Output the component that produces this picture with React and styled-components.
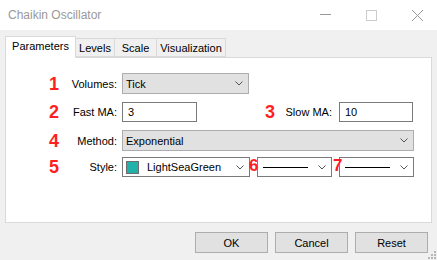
import React from 'react';
import styled, { createGlobalStyle } from 'styled-components';

const GlobalStyle = createGlobalStyle`
  body {
    margin: 0;
    background: #f0f0f0;
    font-family: "Liberation Sans", Arial, sans-serif;
  }
`;

const Window = styled.div`
  position: relative;
  width: 437px;
  height: 260px;
  background: #f0f0f0;
  overflow: hidden;
  font-size: 11px;
  color: #000;
`;

const TitleBar = styled.div`
  height: 30px;
  background: #fff;
  display: flex;
  align-items: center;
  justify-content: space-between;
`;

const Title = styled.div`
  padding-left: 8px;
  font-size: 12px;
  color: #999;
`;

const Controls = styled.div`
  display: flex;
  margin-right: -3px;
`;

const Caption = styled.div`
  width: 46px;
  height: 30px;
  display: flex;
  align-items: center;
  justify-content: center;
`;

const Body = styled.div`
  padding: 6px 5px 0 5px;
`;

const Tabs = styled.div`
  display: flex;
  align-items: flex-end;
  height: 21px;
`;

const Tab = styled.div`
  box-sizing: border-box;
  width: ${p => p.$w}px;
  height: ${p => (p.$active ? 22 : 19)}px;
  margin-left: ${p => (p.$first ? 0 : -1)}px;
  margin-bottom: ${p => (p.$active ? -1 : 0)}px;
  border: 1px solid #d9d9d9;
  border-bottom: ${p => (p.$active ? 'none' : '1px solid #d9d9d9')};
  background: ${p => (p.$active ? '#fff' : '#f0f0f0')};
  position: relative;
  z-index: ${p => (p.$active ? 2 : 1)};
  display: flex;
  align-items: center;
  justify-content: center;
  padding-bottom: ${p => (p.$active ? 3 : 0)}px;
`;

const Panel = styled.div`
  box-sizing: border-box;
  width: 427px;
  height: 166px;
  background: #fff;
  border: 1px solid #d9d9d9;
  padding: 15px 0 0 36px;
  display: flex;
  flex-direction: column;
`;

const Row = styled.div`
  display: flex;
  align-items: center;
  height: ${p => p.$h}px;
  margin-bottom: ${p => p.$mb || 0}px;
`;

const Num = styled.div`
  width: 24px;
  flex-shrink: 0;
  text-align: center;
  color: #ff1f1f;
  font-weight: bold;
  font-size: 18px;
  line-height: 1;
  margin-left: ${p => p.$ml || 0}px;
`;

const Mark = styled.div`
  position: absolute;
  left: ${p => p.$left}px;
  top: -1px;
  color: #ff1f1f;
  font-weight: bold;
  font-size: 17px;
  line-height: 1;
  z-index: 2;
`;

const Label = styled.div`
  width: ${p => p.$w || 51}px;
  flex-shrink: 0;
  text-align: right;
  margin-right: ${p => p.$mr || 5}px;
  white-space: nowrap;
`;

const Select = styled.div`
  position: relative;
  box-sizing: border-box;
  width: ${p => p.$w}px;
  height: ${p => p.$h || 21}px;
  margin-left: ${p => p.$ml || 0}px;
  background: ${p => (p.$white ? '#fff' : '#e1e1e1')};
  border: 1px solid ${p => (p.$white ? '#7a7a7a' : '#adadad')};
  display: flex;
  align-items: center;
  padding: 0 5px 0 3px;
`;

const SelectText = styled.div`
  flex: 1;
  display: flex;
  align-items: center;
  white-space: nowrap;
`;

const Swatch = styled.div`
  width: 11px;
  height: 11px;
  border: 1px solid #6d6d6d;
  background: #20b2aa;
  margin-right: 8px;
`;

const LineSample = styled.div`
  width: 45px;
  height: 1px;
  background: #000;
  margin-left: 2px;
`;

const Input = styled.div`
  box-sizing: border-box;
  width: ${p => p.$w}px;
  height: 20px;
  border: 1px solid #7a7a7a;
  background: #fff;
  display: flex;
  align-items: center;
  padding-left: 5px;
`;

const Footer = styled.div`
  display: flex;
  justify-content: flex-end;
  gap: 7px;
  margin-top: 9px;
  padding-right: 4px;
`;

const Button = styled.div`
  box-sizing: border-box;
  width: 73px;
  height: 21px;
  background: #e1e1e1;
  border: 1px solid #adadad;
  display: flex;
  align-items: center;
  justify-content: center;
`;

const Grip = styled.svg`
  position: absolute;
  right: 1px;
  bottom: 1px;
`;

const Chevron = () => (
  <svg width="8" height="5" viewBox="0 0 8 5">
    <polyline points="0.5,0.5 4,4 7.5,0.5" fill="none" stroke="#555" strokeWidth="1" />
  </svg>
);

const TABS = [
  { name: 'Parameters', w: 71 },
  { name: 'Levels', w: 40 },
  { name: 'Scale', w: 43 },
  { name: 'Visualization', w: 70 },
];

export default function App() {
  return (
    <Window>
      <GlobalStyle />
      <TitleBar>
        <Title>Chaikin Oscillator</Title>
        <Controls>
          <Caption>
            <svg width="11" height="2"><line x1="0" y1="0.5" x2="11" y2="0.5" stroke="#999" /></svg>
          </Caption>
          <Caption>
            <svg width="11" height="11"><rect x="0.5" y="0.5" width="10" height="10" fill="none" stroke="#ccc" /></svg>
          </Caption>
          <Caption>
            <svg width="11" height="11">
              <line x1="0" y1="0" x2="11" y2="11" stroke="#999" />
              <line x1="11" y1="0" x2="0" y2="11" stroke="#999" />
            </svg>
          </Caption>
        </Controls>
      </TitleBar>
      <Body>
        <Tabs>
          {TABS.map((t, i) => (
            <Tab key={t.name} $w={t.w} $first={i === 0} $active={i === 0}>{t.name}</Tab>
          ))}
        </Tabs>
        <Panel>
          <Row $h={21} $mb={8}>
            <Num>1</Num>
            <Label>Volumes:</Label>
            <Select $w={127}>
              <SelectText>Tick</SelectText>
              <Chevron />
            </Select>
          </Row>
          <Row $h={20} $mb={8}>
            <Num>2</Num>
            <Label>Fast MA:</Label>
            <Input $w={75}>3</Input>
            <Num $ml={61}>3</Num>
            <Label $w={50} $mr={7}>Slow MA:</Label>
            <Input $w={74}>10</Input>
          </Row>
          <Row $h={21} $mb={6}>
            <Num>4</Num>
            <Label>Method:</Label>
            <Select $w={292}>
              <SelectText>Exponential</SelectText>
              <Chevron />
            </Select>
          </Row>
          <Row $h={20}>
            <Num>5</Num>
            <Label>Style:</Label>
            <Select $w={128} $h={20} $white>
              <SelectText><Swatch />LightSeaGreen</SelectText>
              <Chevron />
            </Select>
            <Select $w={75} $h={20} $ml={7} $white>
              <Mark $left={-9}>6</Mark>
              <SelectText><LineSample /></SelectText>
              <Chevron />
            </Select>
            <Select $w={75} $h={20} $ml={7} $white>
              <Mark $left={-7}>7</Mark>
              <SelectText><LineSample /></SelectText>
              <Chevron />
            </Select>
          </Row>
        </Panel>
        <Footer>
          <Button>OK</Button>
          <Button>Cancel</Button>
          <Button>Reset</Button>
        </Footer>
      </Body>
      <Grip width="9" height="9" viewBox="0 0 9 9">
        {[[7, 1], [4, 4], [7, 4], [1, 7], [4, 7], [7, 7]].map(([x, y]) => (
          <rect key={`${x}-${y}`} x={x} y={y} width="2" height="2" fill="#b8b8b8" />
        ))}
      </Grip>
    </Window>
  );
}
